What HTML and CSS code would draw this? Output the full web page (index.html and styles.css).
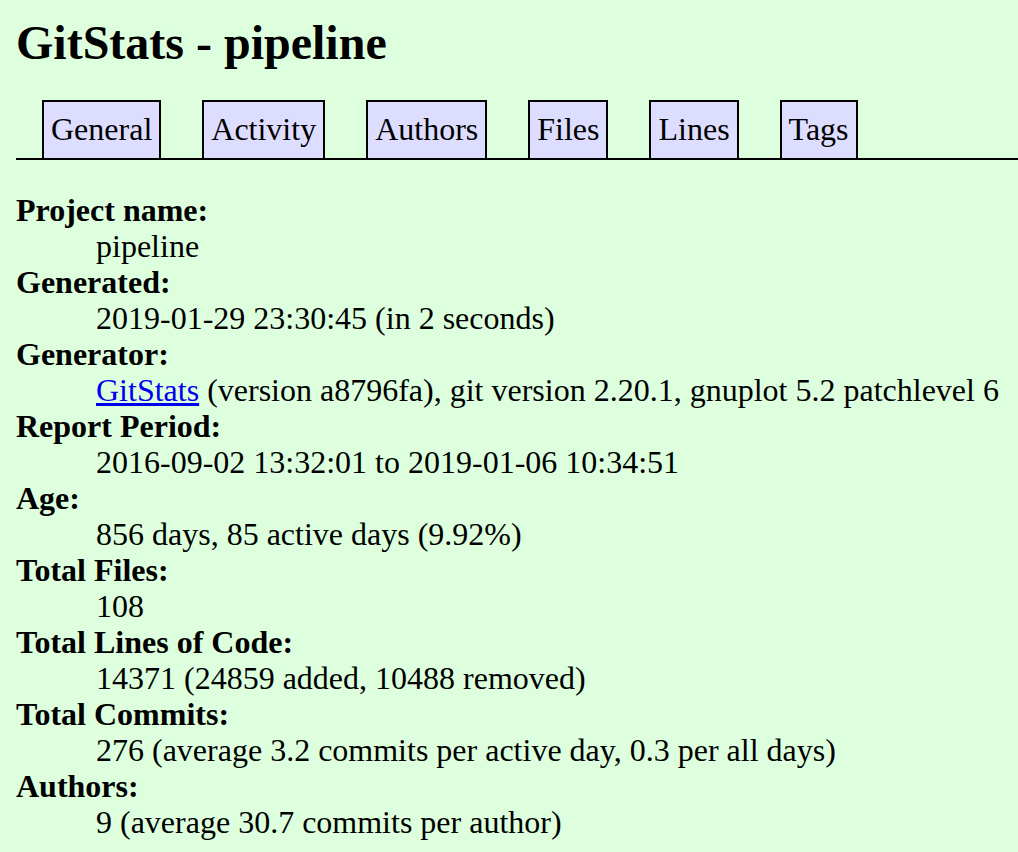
FILE: index.html
```html
<!DOCTYPE html>
<html>
<head>
<meta charset="utf-8">
<title>GitStats - pipeline</title>
<link rel="stylesheet" href="styles.css">
</head>
<body>
<h1 class="title">GitStats - pipeline</h1>
<div class="nav">
  <ul class="tabs">
    <li><a class="tab" href="#">General</a></li>
    <li><a class="tab" href="#">Activity</a></li>
    <li><a class="tab" href="#">Authors</a></li>
    <li><a class="tab" href="#">Files</a></li>
    <li><a class="tab" href="#">Lines</a></li>
    <li><a class="tab" href="#">Tags</a></li>
  </ul>
</div>
<dl class="info">
  <dt>Project name:</dt>
  <dd>pipeline</dd>
  <dt>Generated:</dt>
  <dd>2019-01-29 23:30:45 (in 2 seconds)</dd>
  <dt>Generator:</dt>
  <dd><a class="link" href="#">GitStats</a> (version a8796fa), git version 2.20.1, gnuplot 5.2 patchlevel 6</dd>
  <dt>Report Period:</dt>
  <dd>2016-09-02 13:32:01 to 2019-01-06 10:34:51</dd>
  <dt>Age:</dt>
  <dd>856 days, 85 active days (9.92%)</dd>
  <dt>Total Files:</dt>
  <dd>108</dd>
  <dt>Total Lines of Code:</dt>
  <dd>14371 (24859 added, 10488 removed)</dd>
  <dt>Total Commits:</dt>
  <dd>276 (average 3.2 commits per active day, 0.3 per all days)</dd>
  <dt>Authors:</dt>
  <dd>9 (average 30.7 commits per author)</dd>
</dl>
</body>
</html>
```
FILE: styles.css
```css
html, body {
  background-color: #ddffdd;
}
body {
  margin: 0;
  padding: 15px 0 0 16px;
  color: #000;
  font-family: "Liberation Serif", "Times New Roman", serif;
  font-size: 32px;
  line-height: 36px;
}
.title {
  margin: 0;
  font-size: 48px;
  line-height: 56px;
  font-weight: bold;
}
.nav {
  margin-top: 29px;
  border-bottom: 2px solid #000;
  padding-left: 26px;
}
.tabs {
  display: flex;
  gap: 41px;
  margin: 0;
  padding: 0;
  list-style: none;
}
.tab {
  display: block;
  padding: 9px 7px 11px;
  border: 2px solid #000;
  border-bottom: none;
  background-color: #ddddff;
  color: #000;
  text-decoration: none;
}
.info {
  margin: 32px 0 0;
}
.info dt {
  font-weight: bold;
}
.info dd {
  margin-left: 80px;
}
.link {
  color: #0000ee;
  text-decoration: underline;
}
```
